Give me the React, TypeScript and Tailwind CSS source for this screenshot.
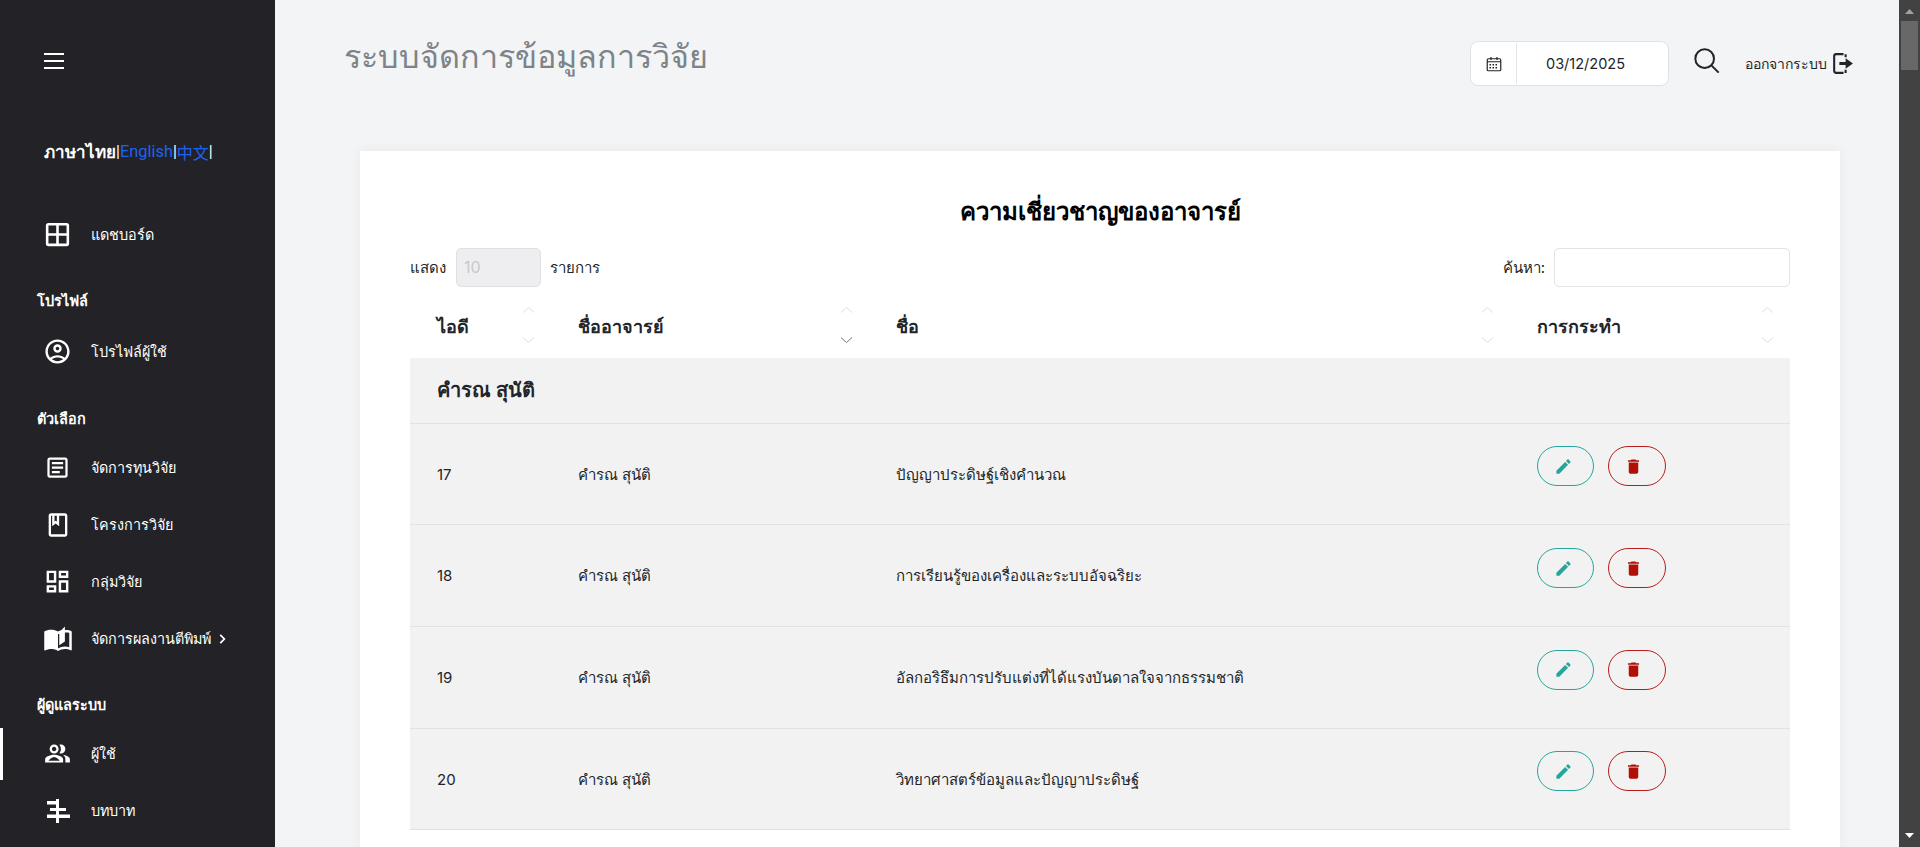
import React from "react";

const icons: Record<string, { size: string; d: React.ReactNode }> = {
  dash: { size: "w-[31px] h-[31px]", d: <path d="M3 5v14a2 2 0 0 0 2 2h14a2 2 0 0 0 2-2V5a2 2 0 0 0-2-2H5a2 2 0 0 0-2 2zm8 14H5v-6h6v6zm0-8H5V5h6v6zm8 8h-6v-6h6v6zm0-8h-6V5h6v6z" /> },
  profile: { size: "w-[29px] h-[29px]", d: <path d="M12 2C6.48 2 2 6.48 2 12s4.48 10 10 10 10-4.48 10-10S17.52 2 12 2zM7.35 18.5C8.66 17.56 10.26 17 12 17s3.34.56 4.65 1.5C15.34 19.44 13.74 20 12 20s-3.34-.56-4.65-1.5zm10.79-1.38C16.45 15.8 14.32 15 12 15s-4.45.8-6.14 2.12C4.7 15.73 4 13.95 4 12c0-4.42 3.58-8 8-8s8 3.58 8 8c0 1.95-.7 3.73-1.86 5.12zM12 6c-1.93 0-3.5 1.57-3.5 3.5S10.07 13 12 13s3.5-1.57 3.5-3.5S13.93 6 12 6zm0 5c-.83 0-1.5-.67-1.5-1.5S11.17 8 12 8s1.5.67 1.500 1.500S12.830 11 12 11z" /> },
  article: { size: "w-[27px] h-[27px]", d: <path d="M19 5v14H5V5h14m0-2H5c-1.1 0-2 .9-2 2v14c0 1.1.9 2 2 2h14c1.1 0 2-.9 2-2V5c0-1.1-.9-2-2-2zm-5 14H7v-2h7v2zm3-4H7v-2h10v2zm0-4H7V7h10v2z" /> },
  book: { size: "w-[28px] h-[28px]", d: <path d="M18 2H6c-1.1 0-2 .9-2 2v16c0 1.1.9 2 2 2h12c1.1 0 2-.9 2-2V4c0-1.1-.9-2-2-2zM9 4h2v5l-1-.75L9 9V4zm9 16H6V4h1v9l3-2.25L13 13V4h5v16z" /> },
  dashboard: { size: "w-[29px] h-[29px]", d: <path d="M19 5v2h-4V5h4M9 5v6H5V5h4m10 8v6h-4v-6h4M9 17v2H5v-2h4M21 3h-8v6h8V3zM11 3H3v10h8V3zm10 8h-8v10h8V11zm-10 4H3v6h8v-6z" /> },
  read: { size: "w-[30px] h-[30px]", d: <path d="M21 5c-1.11-.35-2.33-.5-3.5-.5-1.95 0-4.05.4-5.5 1.5-1.45-1.1-3.55-1.5-5.5-1.5S2.45 4.9 1 6v14.65c0 .25.25.5.5.5.1 0 .15-.05.25-.05C3.1 20.45 5.05 20 6.5 20c1.95 0 4.05.4 5.5 1.5 1.35-.85 3.8-1.5 5.5-1.5 1.65 0 3.35.3 4.75 1.05.1.05.15.05.25.05.25 0 .5-.25.5-.5V6c-.6-.45-1.25-.75-2-1zm0 13.5c-1.1-.35-2.3-.5-3.5-.5-1.7 0-4.15.65-5.5 1.500V8c1.350-.85 3.800-1.500 5.500-1.500 1.200 0 2.400.15 3.500.5v11.500z M17.500 2 L13 6.500 V17 L17.500 14z" /> },
  people: { size: "w-[27px] h-[27px]", d: <path d="M16.67 13.13C18.04 14.06 19 15.32 19 17v3h4v-3c0-2.18-3.57-3.47-6.33-3.87zM15 12c2.21 0 4-1.79 4-4s-1.79-4-4-4c-.47 0-.91.1-1.33.24C14.5 5.27 15 6.58 15 8s-.5 2.73-1.33 3.76c.42.14.86.24 1.33.24zM9 12c2.21 0 4-1.79 4-4s-1.79-4-4-4-4 1.79-4 4 1.79 4 4 4zm0-6c1.100 0 2 .9 2 2s-.9 2-2 2-2-.9-2-2 .9-2 2-2zm0 7c-2.670 0-8 1.340-8 4v3h16v-3c0-2.660-5.330-4-8-4zm-5 5.400c1-1.400 3.200-3.400 5-3.400s4 2 5 3.400H4z" /> },
  roles: { size: "w-[24px] h-[24px]", d: <path d="M10 0h3v24h-3zM1 2h9v3.500H1zM4 9h6v3H4zM1 15.500h9V19H1zM13 9h7v3h-7zM13 15.500h11V19H13z" /> },
};

const Item = ({ icon, label, chevron }: { icon: string; label: string; chevron?: boolean }) => (
  <div className="flex items-center h-[57px] pl-[45px]">
    <span className="w-[25px] h-[25px] mr-[21px] flex items-center justify-center">
      <svg viewBox="0 0 24 24" fill="currentColor" className={`${icons[icon].size} shrink-0`}>{icons[icon].d}</svg>
    </span>
    <span className="text-[14.4px] font-medium whitespace-nowrap">{label}</span>
    {chevron && (
      <svg viewBox="0 0 24 24" fill="none" stroke="currentColor" strokeWidth="3" className="w-[14px] h-[14px] ml-[4px]"><path d="M9 5l7 7-7 7" /></svg>
    )}
  </div>
);

const Section = ({ label, className = "" }: { label: string; className?: string }) => (
  <div className={`pl-[37px] text-[14.4px] font-semibold leading-[20px] ${className}`}>{label}</div>
);

const Sort = ({ dark }: { dark?: boolean }) => (
  <div className="absolute right-[16px] top-[14px] flex flex-col gap-[24px] items-center">
    <svg viewBox="0 0 12 6" fill="none" stroke="#dddddd" strokeWidth="1" className="w-[13px] h-[6px]"><path d="M0.500 5.500l5.500-5 5.500 5" /></svg>
    <svg viewBox="0 0 12 6" fill="none" stroke={dark ? "#777777" : "#dddddd"} strokeWidth="1" className="w-[13px] h-[6px]"><path d="M0.500 0.500l5.500 5 5.500-5" /></svg>
  </div>
);

const rows = [
  ["17", "ปัญญาประดิษฐ์เชิงคำนวณ"],
  ["18", "การเรียนรู้ของเครื่องและระบบอัจฉริยะ"],
  ["19", "อัลกอริธึมการปรับแต่งที่ได้แรงบันดาลใจจากธรรมชาติ"],
  ["20", "วิทยาศาสตร์ข้อมูลและปัญญาประดิษฐ์"],
];

export default function App() {
  return (
    <div className="h-[847px] w-[1920px] overflow-hidden flex bg-[#f3f4f6] font-['Inter','Noto_Sans',sans-serif] text-[#212529]">
      <aside className="w-[275px] shrink-0 bg-[#222227] text-white flex flex-col">
        <div className="pl-[44px] pt-[53px]">
          <div className="w-[20px] h-[16px] flex flex-col justify-between">
            <span className="h-[2px] bg-white" /><span className="h-[2px] bg-white" /><span className="h-[2px] bg-white" />
          </div>
        </div>
        <div className="pl-[44px] mt-[71px] text-[16px] leading-[24px] flex items-center whitespace-nowrap font-['Roboto','Noto_Sans',sans-serif]">
          <span className="font-semibold text-[17px]">ภาษาไทย</span><span>|</span>
          <span className="text-[#1e63f0] text-[16.4px]">English</span><span>|</span>
          <span className="text-[#1e63f0] font-['Noto_Sans_CJK_SC',sans-serif]">中文</span><span>|</span>
        </div>
        <div className="mt-[42px]"><Item icon="dash" label="แดชบอร์ด" /></div>
        <Section label="โปรไฟล์" className="mt-[28px]" />
        <div className="mt-[12px]"><Item icon="profile" label="โปรไฟล์ผู้ใช้" /></div>
        <Section label="ตัวเลือก" className="mt-[29px]" />
        <div className="mt-[10px]">
          <Item icon="article" label="จัดการทุนวิจัย" />
          <Item icon="book" label="โครงการวิจัย" />
          <Item icon="dashboard" label="กลุ่มวิจัย" />
          <Item icon="read" label="จัดการผลงานตีพิมพ์" chevron />
        </div>
        <Section label="ผู้ดูแลระบบ" className="mt-[28px]" />
        <div className="mt-[10px] relative">
          <div className="absolute left-0 top-[3px] w-[3px] h-[52px] bg-white" />
          <Item icon="people" label="ผู้ใช้" />
          <Item icon="roles" label="บทบาท" />
        </div>
      </aside>

      <main className="flex-1 min-w-0 flex flex-col">
        <header className="h-[151px] shrink-0 flex items-start pl-[69px] pr-[44px]">
          <h1 className="mt-[33px] text-[32.3px] leading-[48px] text-[#7e8388] font-medium">ระบบจัดการข้อมูลการวิจัย</h1>
          <div className="ml-auto flex items-center mt-[41px] h-[45px]">
            <div className="w-[199px] h-[45px] flex items-center bg-white border border-[#dfe1e6] rounded-[8px] py-[1px]">
              <div className="w-[46px] h-full flex items-center justify-center border-r border-[#e3e5e8]">
                <svg viewBox="0 0 24 24" fill="none" stroke="#212529" strokeWidth="1.6" className="w-[18px] h-[18px]">
                  <rect x="3" y="5" width="18" height="16" rx="1.5" /><path d="M3 9h18M8 2.500v4M16 2.500v4" />
                  <path strokeWidth="2" strokeDasharray="2 2" d="M6 13h12M6 17h12" />
                </svg>
              </div>
              <div className="flex-1 text-center text-[14.5px] pr-[14px]">03/12/2025</div>
            </div>
            <svg viewBox="0 0 24 24" fill="none" stroke="#212529" strokeWidth="1.7" className="w-[28px] h-[28px] ml-[24px] -mt-[5px]"><circle cx="10" cy="10" r="8" /><path d="M16 16l6 6" /></svg>
            <span className="ml-[24px] text-[14px]">ออกจากระบบ</span>
            <svg viewBox="0 0 24 24" className="w-[25px] h-[25px] ml-[3px]" fill="none" stroke="#212529" strokeWidth="2">
              <path d="M13 3H6a2 2 0 0 0-2 2v14a2 2 0 0 0 2 2h7M15 3v3M15 18v3" />
              <path fill="#212529" stroke="none" d="M9 10.500h6V7l7 5-7 5v-3.500H9z" />
            </svg>
          </div>
        </header>
        <section className="ml-[85px] w-[1480px] flex-1 bg-white px-[50px] shadow-[0_0_12px_rgba(0,0,0,0.05)]">
          <h2 className="text-center text-[24px] font-semibold leading-[36px] mt-[43px] text-black">ความเชี่ยวชาญของอาจารย์</h2>
          <div className="flex items-center justify-between text-[15px] mt-[18px] h-[39px]">
            <div className="flex items-center">
              <span className="pt-[2px]">แสดง</span>
              <div className="ml-[10px] w-[85px] h-[39px] bg-[#eeeef0] border border-[#e0e0e4] rounded-[5px] pl-[7px] leading-[37px] text-[#c8c8c8] mr-[9px] text-[16px]">10</div>
              <span className="pt-[2px]">รายการ</span>
            </div>
            <div className="flex items-center">
              <span className="pt-[2px]">ค้นหา:</span>
              <div className="ml-[9px] w-[236px] h-[39px] bg-white border border-[#e2e2e8] rounded-[5px]" />
            </div>
          </div>
          <table className="w-[1380px] mt-[6px] table-fixed border-collapse text-[15px]">
            <colgroup>
              <col className="w-[141px]" /><col className="w-[318px]" /><col className="w-[641px]" /><col className="w-[280px]" />
            </colgroup>
            <thead>
              <tr className="h-[65px] text-[18px] text-left">
                {["ไอดี", "ชื่ออาจารย์", "ชื่อ", "การกระทำ"].map((h, i) => (
                  <th key={h} className="relative pl-[27px] pt-[2px] font-semibold pr-[40px]">
                    {h}
                    <Sort dark={i === 1} />
                  </th>
                ))}
              </tr>
            </thead>
            <tbody>
              <tr className="h-[65px] bg-[#f2f2f2] border-b border-[#e2e2e6]">
                <td colSpan={4} className="pl-[27px] text-[20px] font-semibold">คำรณ สุนัติ</td>
              </tr>
              {rows.map(([id, name]) => (
                <tr key={id} className="h-[101.7px] bg-[#f2f2f2] border-b border-[#e2e2e6]">
                  <td className="pl-[27px] pt-[2px]">{id}</td>
                  <td className="pl-[27px] pt-[2px]">คำรณ สุนัติ</td>
                  <td className="pl-[27px] pt-[2px]">{name}</td>
                  <td className="pl-[27px] pt-[2px]">
                    <div className="flex gap-[14px] -mt-[17px]">
                      <button className="w-[57px] h-[40px] rounded-[20px] border border-[#26a69a] flex items-center justify-center bg-transparent pr-[5px]">
                        <svg viewBox="0 0 24 24" fill="#26a69a" className="w-[19px] h-[19px]"><path d="M3 17.250V21h3.750L17.810 9.940l-3.750-3.750L3 17.250zM20.710 7.040c.39-.39.39-1.020 0-1.410l-2.340-2.340c-.39-.39-1.020-.39-1.410 0l-1.830 1.830 3.750 3.750 1.830-1.830z" /></svg>
                      </button>
                      <button className="w-[58px] h-[40px] rounded-[20px] border border-[#b71c1c] flex items-center justify-center bg-transparent pr-[7px]">
                        <svg viewBox="0 0 24 24" fill="#b01005" className="w-[19px] h-[19px]"><path d="M6 19c0 1.100.9 2 2 2h8c1.100 0 2-.9 2-2V7H6v12zM19 4h-3.500l-1-1h-5l-1 1H5v2h14V4z" /></svg>
                      </button>
                    </div>
                  </td>
                </tr>
              ))}
            </tbody>
          </table>
        </section>
      </main>

      <div className="w-[21px] shrink-0 bg-[#424242] flex flex-col items-center">
        <svg viewBox="0 0 9 5" className="w-[9px] h-[5px] mt-[9px]" fill="#a0a0a0"><path d="M4.500 0L9 5H0z" /></svg>
        <div className="w-[21px] mt-[7px] px-[2px]"><div className="h-[49px] bg-[#686868]" /></div>
        <svg viewBox="0 0 9 5" className="w-[9px] h-[5px] mt-auto mb-[9px]" fill="#fff"><path d="M0 0h9L4.500 5z" /></svg>
      </div>
    </div>
  );
}
